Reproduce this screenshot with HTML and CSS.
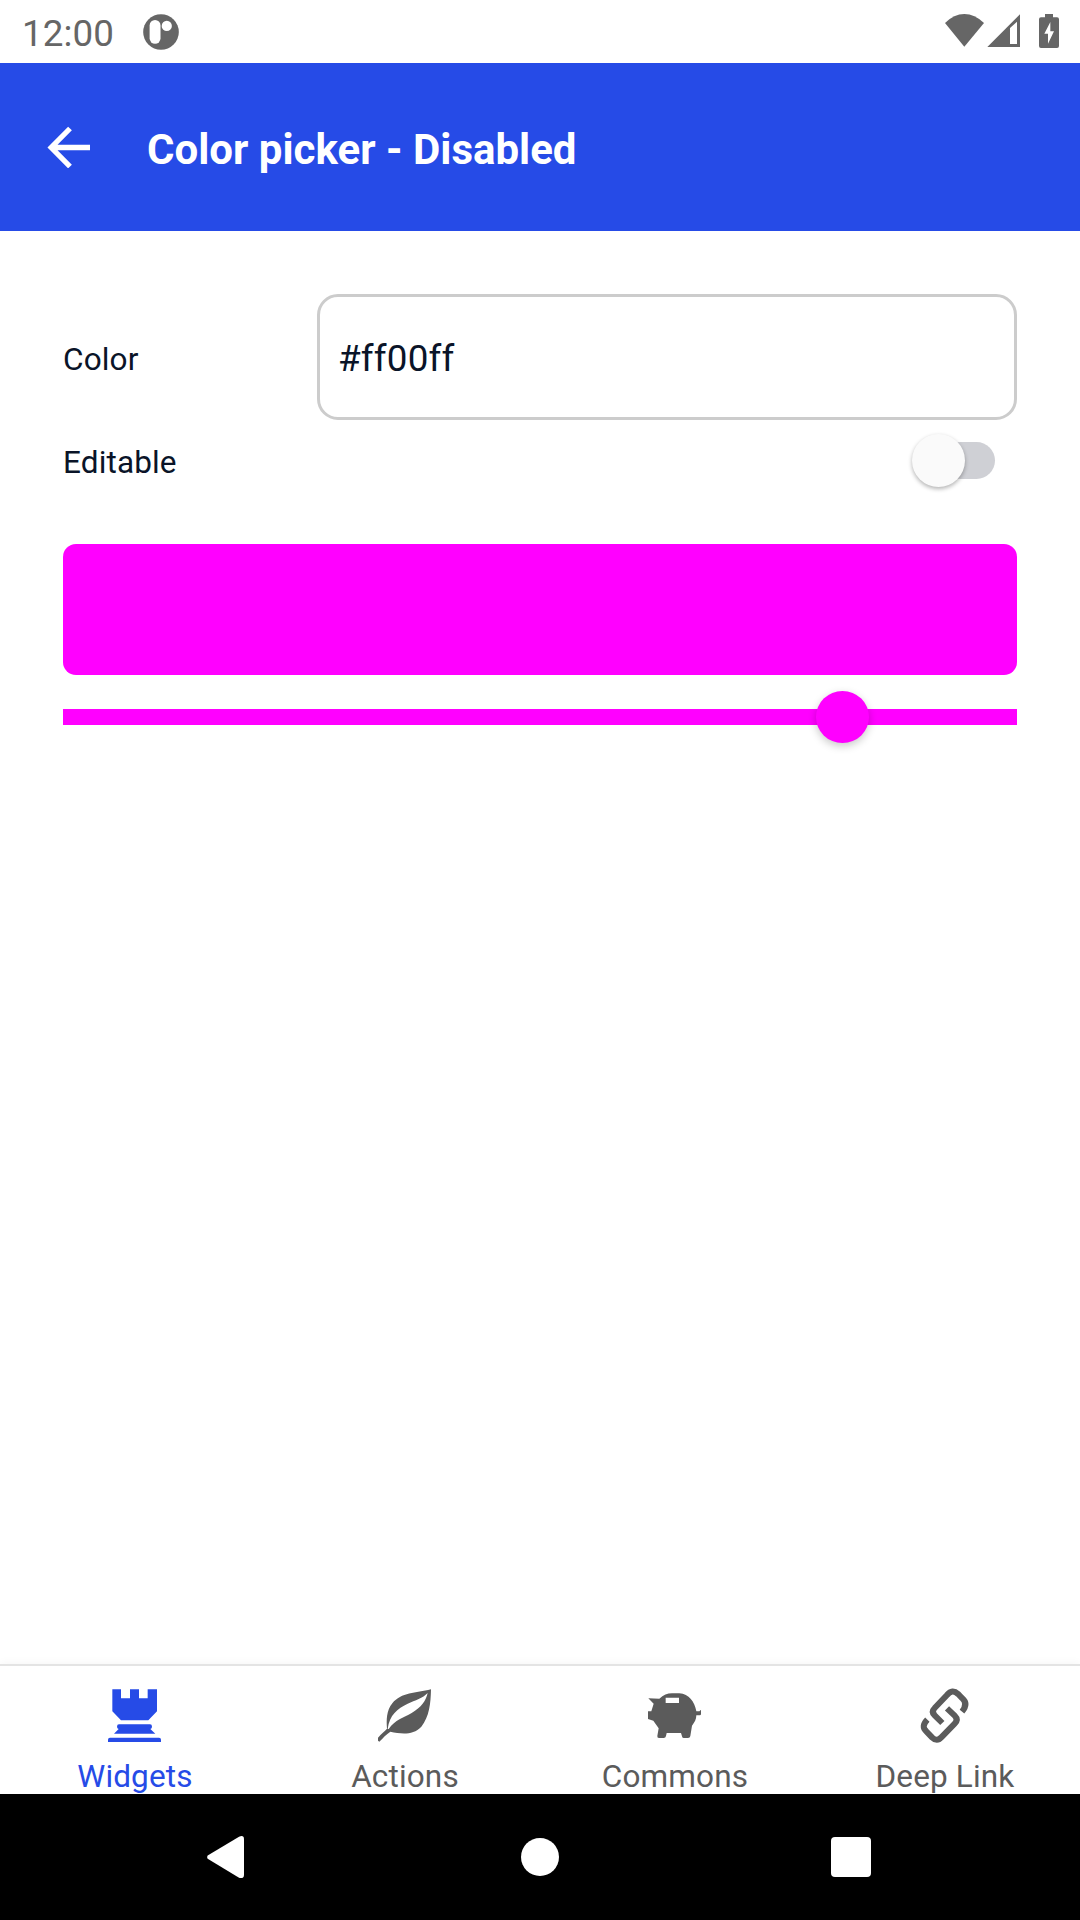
FILE: index.html
```html
<!DOCTYPE html>
<html lang="en">
<head>
<meta charset="utf-8">
<title>Color picker - Disabled</title>
<link rel="stylesheet" href="styles.css">
</head>
<body>
<div class="screen">
  <div class="status-bar">
    <span class="clock">12:00</span>
    <svg class="app-badge" viewBox="429 40 109 109"><circle cx="483.500" cy="94.500" r="54" fill="#666"/><rect x="449" y="58" width="33" height="72" rx="16.500" fill="#fff"/><circle cx="501" cy="76" r="15.500" fill="#fff"/></svg>
    <svg class="status-icons" viewBox="75 36 345 114" fill="#666">
      <path d="M75 69Q102 42 133 42T192 69L133 140Z"/>
      <path fill-rule="evenodd" d="M202 141L300 43V141ZM270 84V132H291V65Z"/>
      <path fill-rule="evenodd" d="M375 42H399V52H411Q417 52 417 58V138Q417 144 411 144H363Q357 144 357 138V58Q357 52 363 52H375ZM391 66L373 101H384V131L402 94H391Z"/>
    </svg>
  </div>

  <header class="app-bar">
    <svg class="back" viewBox="0 0 43 42" fill="none" stroke="#fff" stroke-width="5.300"><path d="M43 21.500H4.500M23 2.500L4.200 21.500L23 40.500"/></svg>
    <h1 class="title">Color picker - Disabled</h1>
  </header>

  <main class="content">
    <div class="row row-color">
      <span class="label">Color</span>
      <div class="field">#ff00ff</div>
    </div>
    <div class="row row-editable">
      <span class="label">Editable</span>
      <div class="switch"><span class="switch-track"></span><span class="switch-thumb"></span></div>
    </div>
    <div class="swatch"></div>
    <div class="slider"><span class="slider-thumb"></span></div>
  </main>

  <nav class="tabs">
    <div class="tab tab-active">
      <svg class="tab-icon" viewBox="144 116 159 159" fill="currentColor"><path d="M157 117H183V144H210V117H237V144H263V117H291V183L265 210H183L157 183ZM177 222H270Q276 222 276 229Q276 235 271 236L286 250H162L176 236Q171 235 171 229Q171 222 177 222ZM144 276V268Q144 262 150 262H297Q303 262 303 268V276Z"/></svg>
      <span class="tab-label">Widgets</span>
    </div>
    <div class="tab">
      <svg class="tab-icon" viewBox="144 116 159 159" fill="currentColor"><path fill-rule="evenodd" d="M303 117C302 160 298 199 274 229C249 255 215 251 181 244C168 252 160 262 148 274L144 271V262C154 249 164 243 171 235C169 209 169 181 187 159C214 126 257 128 303 117ZM293 128C278 144 256 150 233 160C202 175 179 193 173 236H176C196 208 220 202 245 188C274 171 288 151 293 128Z"/></svg>
      <span class="tab-label">Actions</span>
    </div>
    <div class="tab">
      <svg class="tab-icon" viewBox="174 116 159 159" fill="currentColor"><path fill-rule="evenodd" d="M175 144L208 145C220 134 232 129 246 129H268C297 131 314 154 319 183H328Q330 183 330 180H333V191Q333 195 329 195H319C319 207 314 216 306 226L301 257Q300 263 294 263H281Q276 263 276 258L273 248H230L228 257Q227 263 221 263H207Q201 263 202 257L206 234L190 211L174 206V183H184L191 160ZM227 142V158H267V142Z"/></svg>
      <span class="tab-label">Commons</span>
    </div>
    <div class="tab">
      <svg class="tab-icon" viewBox="174 116 159 159" fill="none" stroke="currentColor" stroke-width="18" overflow="visible"><path d="M247 218L224 195Q213 184 224 173L261 134Q277 115 294 131L306 143Q326 160 306 184M261 174L284 196Q296 208 284 220L244 261Q231 276 216 261L199 243Q182 229 202 208"/></svg>
      <span class="tab-label">Deep Link</span>
    </div>
  </nav>

  <div class="system-nav">
    <svg class="nav-back" viewBox="80 167 112 127" fill="#fff"><path d="M82 226L177 169Q192 163 192 177V285Q192 298 177 293L82 236Q79 231 82 226Z"/></svg>
    <span class="nav-home"></span>
    <span class="nav-recent"></span>
  </div>
</div>
</body>
</html>
```
FILE: styles.css
```css
* { box-sizing: border-box; }
body { margin: 0; font-family: Roboto, sans-serif; background: #fff; }
.screen { width: 1080px; height: 1920px; display: flex; flex-direction: column; overflow: hidden; }

.status-bar { height: 63px; flex: none; display: flex; align-items: center; padding: 0 21px 0 22px; }
.clock { width: 121px; padding-top: 3px; font-size: 36.75px; line-height: 43px; letter-spacing: .1px; color: #666; }
.app-badge { width: 36px; height: 36px; }
.status-icons { width: 115px; height: 38px; margin: -1px -1px 0 auto; }

.app-bar { height: 168px; flex: none; display: flex; align-items: center; padding-left: 47px; background: #264be7; }
.back { width: 43px; height: 42px; }
.title { margin: 5px 0 0 57px; font-size: 42px; line-height: 50px; font-weight: 700; color: #fff; }

.content { flex: 1; padding: 63px 63px 0; }
.row { display: flex; align-items: center; }
.label { font-size: 31.5px; line-height: 38px; letter-spacing: .15px; color: #0a1428; }
.row-color { height: 126px; }
.row-color .label { width: 254px; padding-top: 5px; }
.field { flex: 1; height: 126px; padding: 2px 0 0 18px; border: 3px solid #ccc; border-radius: 21px; font-size: 36.75px; line-height: 120px; letter-spacing: .2px; color: #0a1428; }
.row-editable { height: 82px; justify-content: space-between; }
.row-editable .label { padding-top: 3px; }
.switch { display: flex; align-items: center; width: 83px; margin: -2px 22px 0 0; }
.switch-track { flex: 1; height: 37px; margin-left: 20px; border-radius: 19px; background: #cfd0d5; }
.switch-thumb { order: -1; width: 53px; height: 53px; margin-right: -43px; border-radius: 50%; background: #fafafa; box-shadow: 0 2px 4px rgba(0,0,0,.3); z-index: 1; }
.swatch { height: 131px; margin-top: 42px; border-radius: 13px; background: #f0f; }
.slider { display: flex; align-items: center; height: 16px; margin-top: 34px; background: #f0f; }
.slider-thumb { width: 53px; height: 52px; flex: none; margin-left: 753px; border-radius: 50%; background: #f0f; box-shadow: 0 3px 8px rgba(0,0,0,.22); }

.tabs { height: 130px; flex: none; display: flex; border-top: 2px solid #e4e4e4; box-shadow: 0 -2px 8px rgba(0,0,0,.03); overflow: clip; overflow-clip-margin: 12px; }
.tab { flex: 1; display: flex; flex-direction: column; align-items: center; padding-top: 23px; color: #5b5b5b; }
.tab-active { color: #264be7; }
.tab-icon { width: 53px; height: 53px; flex: none; margin-right: 2px; }
.tab-label { margin-top: 16px; font-size: 31.5px; line-height: 38px; letter-spacing: .15px; white-space: nowrap; }

.system-nav { position: relative; height: 126px; flex: none; display: flex; align-items: center; justify-content: space-between; padding: 0 209px 0 207px; background: #000; }
.nav-back { width: 37px; height: 42px; }
.nav-home { width: 38px; height: 38px; margin: 0 -2px 0 2px; border-radius: 50%; background: #fff; }
.nav-recent { width: 40px; height: 40px; border-radius: 4px; background: #fff; }
```
